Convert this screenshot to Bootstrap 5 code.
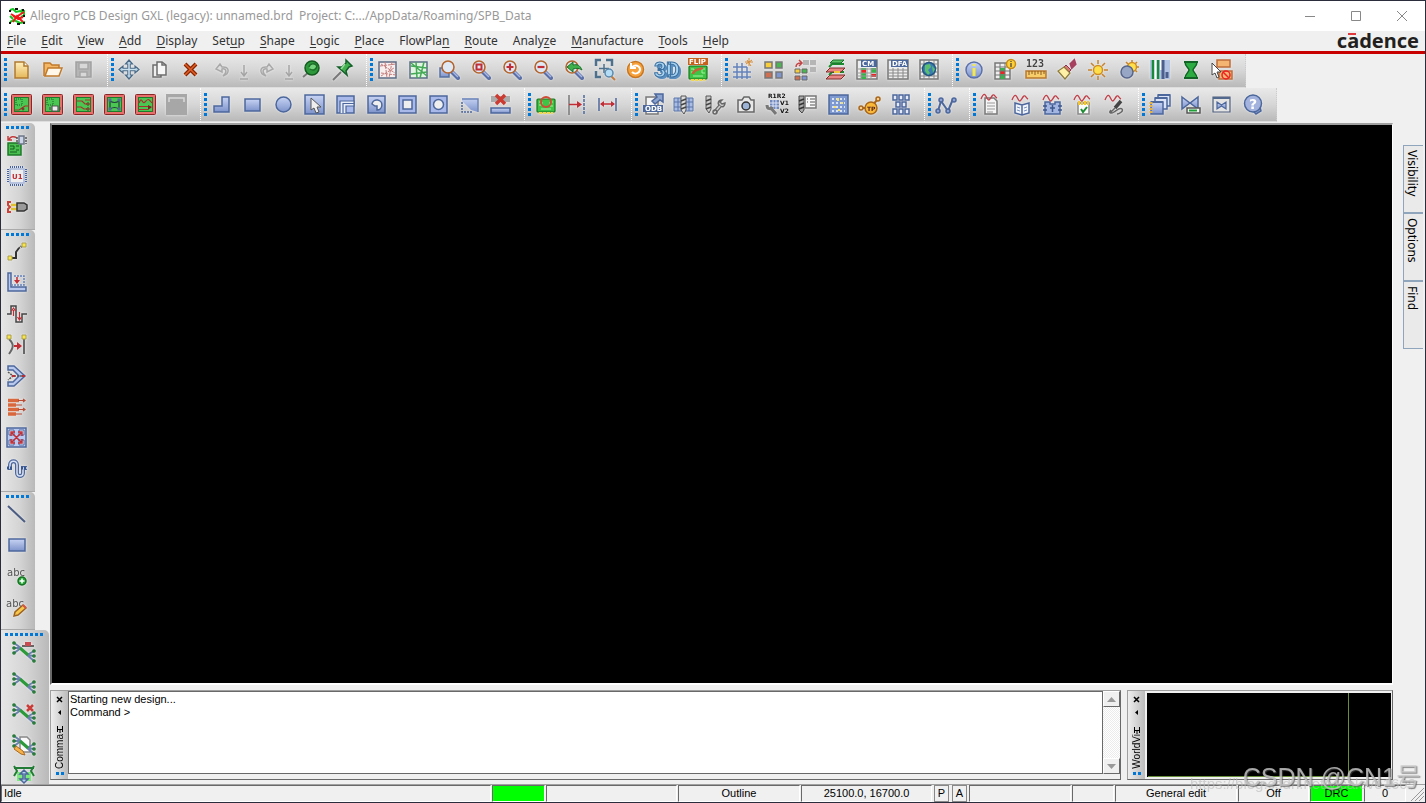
<!DOCTYPE html>
<html lang="en">
<head>
<meta charset="utf-8">
<meta name="viewport" content="width=device-width, initial-scale=1">
<title>Allegro PCB Design GXL (legacy): unnamed.brd</title>
<link href="https://cdn.jsdelivr.net/npm/bootstrap@5.3.0/dist/css/bootstrap.min.css" rel="stylesheet">
<style>
:root{--face:#f0f0f0;--dark:#696969;--mid:#a0a0a0;--blue:#4c679c}
body{font-family:"Noto Sans","Noto Sans CJK SC",sans-serif;font-size:12px;line-height:16px;color:#222;background:#2b2d3d}
.app-window{height:100vh;border:1px solid #2b2d3d;background:var(--face)}
.title-bar{height:30px;background:#fff;color:#999}
.title-text{white-space:pre}
.win-btn{width:46px;height:29px;border:0;background:none;padding:0}
.win-btn svg,.logo-icon{display:block;margin:auto}
.menu-bar{height:20px}
.menu-list{gap:15px;padding-left:6px}
.menu-bar a{color:#333;text-decoration:none}
.menu-bar u{text-underline-offset:2px}
.brand-name{font-size:20px;line-height:20px;font-weight:700;color:#231f20;padding-right:6px}
.brand-name i{top:6px;left:1px;width:8px;height:2px;background:#e03a3e}
.red-rule{height:3px;background:#c80000}
.tool-row{height:34px}
.tool-row + .tool-row{height:35px}
.tool-set{background:linear-gradient(#e9e9e9,#d6d6d6 50%,#b9b9b9);border-right:1px dotted #fff;border-bottom:1px solid #ddd;padding:0 8px 2px 3px}
.tool-row + .tool-row .tool-set{padding-bottom:0}
.tool-row .tool-set:last-child{border-right-color:#ccc}
.grip{flex:none;width:3px;height:23px;margin-right:-1px;background:repeating-linear-gradient(#0078d7 0 3px,transparent 3px 5px)}
.tool{flex:none;width:31px;height:31px;padding:0;border:0;border-radius:0;display:flex;align-items:center;justify-content:center}
.tool.narrow{width:14px}
.tool svg{width:22px;height:22px;fill:none;stroke-width:1.5;overflow:visible;filter:drop-shadow(0 0 1px #eee)}
.tool text{stroke:none;font-family:"DejaVu Sans",sans-serif;font-weight:700}
.side-tools{width:49px}
.side-set{width:34px;background:linear-gradient(90deg,#e6e6e6,#d4d4d4 55%,#b9b9b9);border-bottom:1px solid #aaa;border-radius:0 5px 0 0;padding:3px 2px 7px 0}
.side-set .grip{width:23px;height:3px;margin:0;background:repeating-linear-gradient(90deg,#0078d7 0 3px,transparent 3px 5px)}
.side-set.wide{width:48px}
.side-set.wide .tool{width:46px}
.side-set.wide .tool svg{width:24px}
.side-set.wide .grip{width:38px}
.work-area{min-height:0;padding-top:1px}
.center-area{min-width:0}
.board{background:#000;border:2px solid;border-color:var(--mid) #fff #fff var(--dark);border-right-width:1px;margin-bottom:5px}
.dock{height:90px;gap:6px;margin-bottom:4px;font-family:"Liberation Sans",sans-serif;font-size:11px;line-height:13px;color:#000}
.dock-pane{border:1px solid var(--mid);border-right-color:var(--dark);border-bottom-color:var(--dark)}
.dock-head{width:17px;background:linear-gradient(90deg,#eee,#bbb);padding:2px 0 4px}
.dock-head button{border:0;background:none;padding:0;height:13px;display:block}
.dock-head svg{display:block;margin:auto}
.dock-head .pin{height:9px}
.dock-name{writing-mode:vertical-rl;transform:rotate(180deg);font-size:10px;line-height:15px;white-space:nowrap;margin-bottom:3px}
.dock-dots{width:8px;height:3px;background:repeating-linear-gradient(90deg,#0078d7 0 3px,transparent 3px 5px)}
.console-box{border:1px solid var(--dark);resize:none;padding:1px;outline:0;margin-bottom:5px;overflow:hidden;background:#fff;color:#000}
.bar-track{width:17px;margin-bottom:5px;background:repeating-conic-gradient(#fff 0 25%,#ebebeb 0 50%) 0 0/2px 2px}
.bar-track button{width:17px;height:16px;padding:0;background:var(--face);border:1px solid;border-color:#fff var(--dark) var(--dark) #fff}
.bar-track svg{display:block;margin:auto}
.world-pane{width:266px}
.world-map{background:#000;margin:2px 1px 2px 2px}
.world-line{right:42px;top:0;bottom:0;left:1px;border:solid #6a8f3c;border-width:0 1px 1px 0}
.panel-tabs{width:32px;padding:22px 2px 0 10px}
.panel-tab{height:68px;border:1px solid #8ea5bb;border-right:0;background:#eaeaea;writing-mode:vertical-rl;text-align:left;padding:4px 3px 4px 0;color:#000;line-height:15px;width:20px}
.status-bar{height:18px;border-top:1px solid var(--mid);font-family:"Liberation Sans",sans-serif;font-size:11px;line-height:14px;color:#000}
.status-cell{border:1px solid;border-color:var(--dark) #fff #fff var(--dark);text-align:center;white-space:nowrap;margin-right:1px}
.status-cell.idle{text-align:left;padding-left:2px}
.status-bar button{flex:none;width:15px;padding:0;margin:0 2px 0 1px;border:1px solid;border-color:#fff #222 #222 #fff;outline:1px solid #888;outline-offset:-1px;background:var(--face);line-height:13px}
.w53{width:53px}.w122{width:122px}.w131{width:131px}.w102{width:102px}.w42{width:42px}.w71{width:71px}
.lime{background:#0f0}
.stamp{right:5px;bottom:10px;font:25px/32px "Liberation Sans","Noto Sans CJK SC",sans-serif;color:#c9c9c9cc;text-shadow:1px 1px 1px #555a;pointer-events:none;white-space:nowrap}
.stamp-url{right:10px;bottom:9px;font:15px/20px "Liberation Sans",sans-serif;color:#b9b9b999;pointer-events:none;white-space:nowrap}
</style>
</head>
<body class="m-0 overflow-hidden">
<svg width="0" height="0" class="position-absolute" aria-hidden="true">
<defs>
<linearGradient id="gb" x2="0" y2="1"><stop stop-color="#c8d4f4"/><stop offset="1" stop-color="#7d93ca"/></linearGradient>
<linearGradient id="gy" x2="0" y2="1"><stop stop-color="#fff0bd"/><stop offset="1" stop-color="#e5b75a"/></linearGradient>
<symbol id="lens" viewBox="0 0 22 22"><path d="M13 13l6 6" stroke="#5b6fa8" stroke-width="4" stroke-linecap="round"/><path d="M13 12l6 6" stroke="#a9b8e2" stroke-width="1.500"/><circle cx="9" cy="8" r="6" fill="#dfe9f6" stroke="#b3642c" stroke-width="1.600"/></symbol>
<symbol id="pcb" viewBox="0 0 22 22"><rect x=".5" y=".5" width="20" height="20" rx="1" fill="#e8706c" stroke="#8a2626" stroke-width="1"/><rect x="3.500" y="3.500" width="14" height="14" fill="#4cc653" stroke="#1d7a28" stroke-width="1"/></symbol>
<symbol id="net" viewBox="0 0 24 22"><path d="M2 2l7 5M1 7h8M2 12l7-5M22 10l-7 4M22 15l-7-1M22 20l-7-6" stroke="#6b80ad" stroke-width="2"/><path d="M8 7l8 7" stroke="#2c9a3a" stroke-width="3"/><g fill="#46b552" stroke="#1f7030" stroke-width="1.200"><circle cx="2" cy="2" r="1.200"/><circle cx="2" cy="7" r="1.200"/><circle cx="2" cy="12" r="1.200"/><circle cx="22" cy="10" r="1.200"/><circle cx="22" cy="15" r="1.200"/><circle cx="22" cy="20" r="1.200"/></g></symbol>
<symbol id="wave" viewBox="0 0 22 22"><path d="M1 6c3-7 4-5 6-1s3 1 5-2 3 1 5 2" fill="none" stroke="#c0404a" stroke-width="1.400"/></symbol>
<symbol id="board" viewBox="0 0 22 22"><rect x="2" y="5" width="18" height="13" rx="1" fill="#3fc445" stroke="#14751d" stroke-width="1.200"/><path d="M4 19h14" stroke="#f2d84a" stroke-width="2" stroke-dasharray="3 1"/><path d="M4 8h3v3H4m14-3h-3v4h3M6 15h10" stroke="#a6f0a0" stroke-width="1" fill="none"/></symbol>
</defs>
</svg>

<div class="app-window d-flex flex-column">
  <header>
    <div class="title-bar d-flex align-items-center ps-2">
      <svg class="logo-icon flex-shrink-0 ms-0 me-1" width="17" height="17" viewBox="0 0 17 17" fill="none"><path d="M1 2l3-1 3 3 4-1 4 2M1 14l4-2 6 3 5-1M12 2l3 1v4l-3 2M1 8l3 3" stroke="#10c820" stroke-width="2"/><path d="M2 6l5 3 8-5M4 14l4-6 6 6M4 8l5 3 5-2" stroke="#f01818" stroke-width="2"/><path d="M0 3h2M6 1h3M13 2h2M0 15h2M8 16h3M14 15h2M14 8h2" stroke="#111" stroke-width="2"/></svg>
      <span class="title-text flex-grow-1">Allegro PCB Design GXL (legacy): unnamed.brd  Project: C:.../AppData/Roaming/SPB_Data</span>
      <button class="win-btn" aria-label="Minimize"><svg width="12" height="12" stroke="#888"><path d="M1 6.500h10"/></svg></button>
      <button class="win-btn" aria-label="Maximize"><svg width="12" height="12" fill="none" stroke="#888"><path d="M1.500 1.500h9v9h-9z"/></svg></button>
      <button class="win-btn" aria-label="Close"><svg width="12" height="12" stroke="#888"><path d="M1 1l10 10M11 1L1 11"/></svg></button>
    </div>
    <div class="menu-bar d-flex align-items-center justify-content-between">
      <nav class="menu-list d-flex" aria-label="Main menu">
        <a href="#"><u>F</u>ile</a><a href="#"><u>E</u>dit</a><a href="#"><u>V</u>iew</a><a href="#"><u>A</u>dd</a><a href="#"><u>D</u>isplay</a><a href="#">Set<u>u</u>p</a><a href="#"><u>S</u>hape</a><a href="#"><u>L</u>ogic</a><a href="#"><u>P</u>lace</a><a href="#">FlowPla<u>n</u></a><a href="#"><u>R</u>oute</a><a href="#">Analy<u>z</u>e</a><a href="#"><u>M</u>anufacture</a><a href="#"><u>T</u>ools</a><a href="#"><u>H</u>elp</a>
      </nav>
      <span class="brand-name">c<span class="position-relative">a<i class="position-absolute"></i></span>dence</span>
    </div>
    <div class="red-rule"></div>
  </header>

  <div class="tool-row d-flex" role="toolbar" aria-label="Standard">
    <div class="tool-set d-flex align-items-center"><span class="grip"></span>
      <button class="btn tool" aria-label="New"><svg viewBox="0 0 22 22"><path d="M4 3h9l4 4v12H4z" fill="url(#gy)" stroke="#b0792f"/><path d="M13 3v4h4" fill="#fff" stroke="#b0792f"/></svg></button>
      <button class="btn tool" aria-label="Open"><svg viewBox="0 0 22 22"><path d="M2 17V4h6l2 2h7v4" fill="#f3b765" stroke="#c07a2c"/><path d="M3 17l3-8h14l-3 8z" fill="#fff8ea" stroke="#c07a2c"/></svg></button>
      <button class="btn tool" aria-label="Save"><svg viewBox="0 0 22 22"><path d="M3 3h15v15H3z" fill="#b5b5b5" stroke="#a0a0a0"/><path d="M6 4h9v6H6zM7 13h7v5H7z" fill="#d8d8d8" stroke="#a6a6a6"/></svg></button>
    </div>
    <div class="tool-set d-flex align-items-center"><span class="grip"></span>
      <button class="btn tool" aria-label="Move"><svg viewBox="0 0 22 22"><path d="M11 2v17M2 10.500h18" stroke="#4a6a86" stroke-width="3.500"/><path d="M11 1l3.500 4h-7zM11 20l3.500-4h-7zM1 10.500L5 7v7zM21 10.500L17 7v7z" fill="#b7d3e6" stroke="#4a6a86" stroke-width="1.200"/><path d="M11 4v13M4 10.500h14" stroke="#c9e0ef" stroke-width="1.500"/></svg></button>
      <button class="btn tool" aria-label="Copy"><svg viewBox="0 0 22 22" stroke="#6c6c6c"><path d="M4 6h8v12H4z" fill="#eee"/><path d="M8 3h5l4 3v10H8z" fill="#f7f7f7"/><path d="M13 3v3h4"/></svg></button>
      <button class="btn tool" aria-label="Delete"><svg viewBox="0 0 22 22"><path d="M5 5l11 11M16 5L5 16" stroke="#8a2500" stroke-width="4"/><path d="M5 5l11 11M16 5L5 16" stroke="#e0602a" stroke-width="1.500"/></svg></button>
      <button class="btn tool" aria-label="Undo"><svg viewBox="0 0 22 22" stroke="#a9a9a9"><path d="M9 5L5 10l6 3v-3c5-1 5 4 1 7 7-2 7-10-1-9z" fill="#ddd"/></svg></button>
      <button class="btn tool narrow" aria-label="Undo list"><svg viewBox="0 0 22 22" stroke="#a5a5a5"><path d="M11 6v11M8 13l3 4 3-4M7 20h8"/></svg></button>
      <button class="btn tool" aria-label="Redo"><svg viewBox="0 0 22 22" stroke="#a9a9a9"><path d="M13 5l4 5-6 3v-3c-5-1-5 4-1 7-7-2-7-10 1-9z" fill="#ddd"/></svg></button>
      <button class="btn tool narrow" aria-label="Redo list"><svg viewBox="0 0 22 22" stroke="#a5a5a5"><path d="M11 6v11M8 13l3 4 3-4M7 20h8"/></svg></button>
      <button class="btn tool" aria-label="Fix"><svg viewBox="0 0 22 22"><path d="M2 18l6-5" stroke="#777" stroke-width="2"/><circle cx="11" cy="9" r="7" fill="#2c983b" stroke="#145c20"/><path d="M8 8c1-4 6-4 8-1-1 4-4 5-7 3" fill="#74d27c" stroke="#1c6e29"/></svg></button>
      <button class="btn tool" aria-label="Unfix"><svg viewBox="0 0 22 22"><path d="M1 21l8-8" stroke="#777" stroke-width="2"/><path d="M14 1l6 6-3 1-3 4 1 4-9-8h4l4-4z" fill="#43b04e" stroke="#14602a"/><path d="M13 5l-4 5" stroke="#9be0a0"/></svg></button>
    </div>
    <div class="tool-set d-flex align-items-center"><span class="grip"></span>
      <button class="btn tool" aria-label="Unrats all"><svg viewBox="0 0 22 22"><path d="M2 3h17v16H2z" fill="#f7eeee" stroke="#5b6b85"/><path d="M3 7l16-2M4 14l15 2M8 3l2 16M15 3l-3 16M4 5l14 9M4 17l13-8" stroke="#c47c7c" stroke-width="1" stroke-dasharray="3 1"/></svg></button>
      <button class="btn tool" aria-label="Rats all"><svg viewBox="0 0 22 22"><path d="M2 3h17v16H2z" fill="#e2f5e2" stroke="#5b6b85"/><path d="M3 7l16 2M3 15l16-2M8 3l1 16M16 3l-4 16M3 4l16 13" stroke="#42a955"/></svg></button>
      <button class="btn tool" aria-label="Zoom points"><svg viewBox="0 0 22 22"><path d="M1 9h9v9H1z" fill="url(#gb)" stroke="#55709f"/><use href="#lens"/></svg></button>
      <button class="btn tool" aria-label="Zoom fit"><svg viewBox="0 0 22 22"><use href="#lens"/><path d="M6.500 5.500h5v5h-5z" stroke="#c22c34" stroke-width="2"/></svg></button>
      <button class="btn tool" aria-label="Zoom in"><svg viewBox="0 0 22 22"><use href="#lens"/><path d="M9 4.500v7M5.500 8h7" stroke="#c22c34" stroke-width="2.200"/></svg></button>
      <button class="btn tool" aria-label="Zoom out"><svg viewBox="0 0 22 22"><use href="#lens"/><path d="M5.500 8h7" stroke="#c22c34" stroke-width="2.200"/></svg></button>
      <button class="btn tool" aria-label="Zoom previous"><svg viewBox="0 0 22 22"><use href="#lens"/><path d="M4 8l6-5v3c4-1 7 0 9 5-3-2-5-2-9-1v3z" fill="#3fb04c" stroke="#1a7028" stroke-width="1"/></svg></button>
      <button class="btn tool" aria-label="Zoom selection"><svg viewBox="0 0 22 22"><path d="M2 7V1h5M12 1h6v6M2 12v6h5" stroke="#4d708c" stroke-width="2.500"/><path d="M10 5v9M5 9.500h10" stroke="#4d708c" stroke-width="1.500"/><path d="M17 17l4 4" stroke="#c27a3c" stroke-width="2"/><circle cx="15" cy="14" r="4" fill="#b5dcf5" stroke="#5a87ab"/></svg></button>
      <button class="btn tool" aria-label="Refresh"><svg viewBox="0 0 22 22"><circle cx="10.500" cy="10.500" r="8" fill="#f7a13c" stroke="#c77722"/><path d="M7 8c5-4 10 1 7 5-2 2-5 2-7 0M6 4v5h5" stroke="#fff" stroke-width="2"/></svg></button>
      <button class="btn tool" aria-label="3D view"><svg viewBox="0 0 22 22"><text x="0" y="20" font-size="21" style="font-family:Roboto,sans-serif;font-weight:900;fill:#5b8fc0">3D</text><text x="-2" y="18" font-size="21" style="font-family:Roboto,sans-serif;font-weight:700;fill:#a8d3f0;stroke:#3a6f9f;stroke-width:1px">3D</text></svg></button>
      <button class="btn tool" aria-label="Flip design"><svg viewBox="0 0 22 22"><use href="#board" y="2"/><path d="M6 15c0-5 8-5 10-6" stroke="#c66238" stroke-width="2.500"/><path d="M1-1h20v7H1z" fill="#c7621d"/><text x="2" y="5" font-size="7" fill="#fff">FLIP</text></svg></button>
    </div>
    <div class="tool-set d-flex align-items-center"><span class="grip"></span>
      <button class="btn tool" aria-label="Grid toggle"><svg viewBox="0 0 22 22"><path d="M5 4v16M10 4v16M15 8v12M1 8h14M1 13h18M1 18h18" stroke="#6382bb"/><path d="M14 5l6-4M15 1l4 6M17-1v8M13 3h8" stroke="#d38a34" stroke-width="1"/></svg></button>
      <button class="btn tool" aria-label="Color dialog"><svg viewBox="0 0 22 22" stroke="#777" stroke-width="1.200"><path d="M2 3h7v6H2z" fill="#f7ce3a"/><path d="M13 3h6v6h-6z" fill="#48b750"/><path d="M2 13h7v6H2z" fill="#cf6f52"/><path d="M13 13h6v6h-6z" fill="#7d95d0"/></svg></button>
      <button class="btn tool" aria-label="Swap colors"><svg viewBox="0 0 22 22"><path d="M9 1h6v5H9zM16 1h6v5h-6zM16 8h6v5h-6z" fill="#b5b5b5"/><g stroke="#666" stroke-width="1"><path d="M1 10h5v4H1z" fill="#f7ce3a"/><path d="M8 10h5v4H8z" fill="#48b750"/><path d="M1 17h5v4H1z" fill="#cf6f52"/><path d="M8 17h5v4H8z" fill="#7d95d0"/></g><path d="M2 8c0-3 2-4 5-4M5 1l3 3-3 3" stroke="#c44545"/></svg></button>
      <button class="btn tool" aria-label="Cross section"><svg viewBox="0 0 22 22"><path d="M1 20l4-4h15l-4 4z" fill="#e98683" stroke="#7e2b2b" stroke-width="1"/><path d="M4 16l3-3h12M4 8l3-3h12" stroke="#1a8c2f" stroke-width="2"/><path d="M1 13l4-4h15l-4 4z" fill="#e98683" stroke="#7e2b2b" stroke-width="1"/><path d="M5 4l3-3h11l-3 3z" fill="#5ac466" stroke="#1a6c2a" stroke-width="1"/><path d="M9 13h6" stroke="#f2c63a" stroke-width="2"/></svg></button>
      <button class="btn tool" aria-label="Constraint manager"><svg viewBox="0 0 22 22"><path d="M1 1h20v19H1z" fill="#eee" stroke="#777"/><path d="M5 9h5v11H5zM15 9h5v5h-5z" fill="#36b44a"/><path d="M5 11h5v3H5zM15 15h5v3h-5z" fill="#e22"/><path d="M1 10h20M1 14h20M1 17h20M5 9v11M11 9v11M15 9v11" stroke="#999" stroke-width="1"/><path d="M5 1h16v7H5z" fill="#4c679c"/><text x="6" y="7" font-size="7" fill="#fff">CM</text></svg></button>
      <button class="btn tool" aria-label="DFA spreadsheet"><svg viewBox="0 0 22 22"><path d="M1 1h20v19H1z" fill="#eee" stroke="#777"/><path d="M1 11h20M1 14h20M1 17h20M6 9v11M11 9v11M16 9v11" stroke="#888" stroke-width="1"/><path d="M4 1h17v7H4z" fill="#4c679c"/><text x="5" y="7" font-size="7" fill="#fff">DFA</text></svg></button>
      <button class="btn tool" aria-label="Global constraints"><svg viewBox="0 0 22 22"><path d="M2 1h18v19H2z" fill="#eee" stroke="#777"/><path d="M2 5h18M2 9h18M2 13h18M2 17h18M6 1v19M11 1v19M16 1v19" stroke="#888" stroke-width="1"/><circle cx="11" cy="10" r="6.500" fill="#3c7db8" stroke="#245680"/><path d="M7 6l5-1 1 3-3 3 2 3-2 2-3-4zM14 7l3 3-2 4z" fill="#5cc06b"/></svg></button>
    </div>
    <div class="tool-set d-flex align-items-center"><span class="grip"></span>
      <button class="btn tool" aria-label="Show element"><svg viewBox="0 0 22 22"><circle cx="11" cy="11" r="8" fill="url(#gb)" stroke="#5b70a8"/><path d="M11 9v8M11 5v2" stroke="#f5e94a" stroke-width="3"/></svg></button>
      <button class="btn tool" aria-label="Property sheet"><svg viewBox="0 0 22 22"><path d="M1 4h15v16H1z" fill="#eee" stroke="#777"/><path d="M6 9h5v11H6z" fill="#36b44a"/><path d="M6 12h5v3H6z" fill="#e22"/><path d="M1 8h15M1 12h15M1 16h15M6 4v16M11 4v16" stroke="#777" stroke-width="1"/><circle cx="17" cy="5" r="4.500" fill="#fad13c" stroke="#c78a12"/><path d="M17 2v1M17 4v4" stroke="#654"/></svg></button>
      <button class="btn tool" aria-label="Measure"><svg viewBox="0 0 22 22"><text x="1" y="8" font-size="10" style="font-family:'DejaVu Sans Mono',monospace" fill="#444">123</text><path d="M1 12h20v7H1z" fill="#f7cc6a" stroke="#b9782b"/><path d="M4 12v4M7 12v3M10 12v4M13 12v3M16 12v4M19 12v3" stroke="#8b5a20" stroke-width="1"/></svg></button>
      <button class="btn tool" aria-label="Highlight"><svg viewBox="0 0 22 22"><path d="M15 5l3-3 1 3-3 3z" fill="#8f3452" stroke="#a5405f" stroke-width="3"/><path d="M10 6l5 5-2 2-5-5z" fill="#d87a72" stroke="#8f3452" stroke-width="1"/><path d="M8 8l6 6-5 6-7-8z" fill="#fff0a8" stroke="#8b7a3c" stroke-width="1.200"/></svg></button>
      <button class="btn tool" aria-label="Shadow on"><svg viewBox="0 0 22 22"><path d="M11 1v4M11 17v4M1 11h4M17 11h4M4 4l3 3M15 15l3 3M18 4l-3 3M4 18l3-3" stroke="#c8822d"/><circle cx="11" cy="11" r="4.500" fill="#ffe04a" stroke="#cf8e24"/></svg></button>
      <button class="btn tool" aria-label="Shadow off"><svg viewBox="0 0 22 22"><path d="M14 1v3M21 8h-3M19 3l-2 2M8 3l2 2M19 13l-2-2" stroke="#c8822d"/><circle cx="14" cy="8" r="4.500" fill="#ffe04a" stroke="#cf8e24"/><circle cx="9" cy="13" r="6" fill="#98a6c6" stroke="#56658b"/></svg></button>
      <button class="btn tool" aria-label="Layer stripes"><svg viewBox="0 0 22 22"><path d="M1 1h20v19H1z" fill="#b3c3e4"/><path d="M4 1v19M9 1v19" stroke="#188b38" stroke-width="2.500"/><path d="M6.500 1v19M12 1v10" stroke="#fff" stroke-width="2"/><path d="M14 1v19M18 13v6" stroke="#4c5f8c" stroke-width="3"/></svg></button>
      <button class="btn tool" aria-label="Waive DRC"><svg viewBox="0 0 22 22"><path d="M5 3h12c0 5-4 6-4 8s4 4 4 8H5c0-4 4-6 4-8S5 8 5 3z" fill="#2dab43" stroke="#116426"/><path d="M4 3h14M4 19h14" stroke="#116426" stroke-width="2"/></svg></button>
      <button class="btn tool" aria-label="Selection filter"><svg viewBox="0 0 22 22"><path d="M6 1h13v7H6zM8 12h13v8H8z" fill="#f4b573" stroke="#bd6c3b"/><circle cx="15" cy="16" r="4" stroke="#e22"/><path d="M12 13l6 6" stroke="#e22"/><path d="M1 4v12l3-2 2 5 2-1-2-5h4z" fill="#fff" stroke="#444" stroke-width="1"/></svg></button>
    </div>
  </div>

  <div class="tool-row d-flex" role="toolbar" aria-label="Design">
    <div class="tool-set d-flex align-items-center"><span class="grip"></span>
      <button class="btn tool" aria-label="Etch edit"><svg viewBox="0 0 22 22"><use href="#pcb"/><path d="M5 5h6v6H5z" stroke="#176022" stroke-width="1" stroke-dasharray="1 1"/><path d="M4 16h4l3-2M11 14l3-2h3" stroke="#a5322c" stroke-width="1.200"/><circle cx="12" cy="15" r="1" stroke="#7c2020" stroke-width="1"/></svg></button>
      <button class="btn tool" aria-label="Placement edit"><svg viewBox="0 0 22 22"><use href="#pcb"/><path d="M5 5h6v6H5z" stroke="#176022" stroke-width="1" stroke-dasharray="1 1"/><path d="M10 12h6v5h-6zM8 13v3M18 13v3" fill="#eee" stroke="#555" stroke-width="1.200"/></svg></button>
      <button class="btn tool" aria-label="Flow edit"><svg viewBox="0 0 22 22"><use href="#pcb"/><path d="M4 7h5l3 3h2M4 13h4l3 2h3M12 6h5" stroke="#a5322c" stroke-width="1.200"/><circle cx="15" cy="10" r="1.200" stroke="#7c2020" stroke-width="1"/><circle cx="15" cy="15" r="1.200" stroke="#7c2020" stroke-width="1"/></svg></button>
      <button class="btn tool" aria-label="General edit"><svg viewBox="0 0 22 22"><use href="#pcb"/><path d="M6 7c3 2 6 2 9 0M6 15c3-2 6-2 9 0M6 7v8M15 7v8" stroke="#23413c" stroke-width="1.200"/><path d="M4.500 4.500h3v3h-3zM13.500 4.500h3v3h-3zM4.500 13.500h3v3h-3zM13.500 13.500h3v3h-3z" fill="#526b92"/></svg></button>
      <button class="btn tool" aria-label="Signal edit"><svg viewBox="0 0 22 22"><use href="#pcb"/><path d="M4 9c3-8 3 2 6-1s3-4 7 1M4 12.500h9M4 15.500h9" stroke="#a5322c" stroke-width="1.200"/><path d="M13 11l4 2-4 3z" fill="#7c2020"/></svg></button>
      <button class="btn tool" aria-label="Shape edit"><svg viewBox="0 0 22 22"><path d="M0 0h21v21H0z" fill="#a7a7a7"/><path d="M3 8V4h15v4" stroke="#dadada"/></svg></button>
    </div>
    <div class="tool-set d-flex align-items-center"><span class="grip"></span>
      <button class="btn tool" aria-label="Add polygon"><svg viewBox="0 0 22 22"><path d="M11 3h7v15H3v-6h8z" fill="url(#gb)" stroke="#4c679c"/></svg></button>
      <button class="btn tool" aria-label="Add rectangle"><svg viewBox="0 0 22 22"><path d="M3 5h15v12H3z" fill="url(#gb)" stroke="#4c679c"/></svg></button>
      <button class="btn tool" aria-label="Add circle"><svg viewBox="0 0 22 22"><circle cx="10.500" cy="10.500" r="7.500" fill="url(#gb)" stroke="#4c679c"/></svg></button>
      <button class="btn tool" aria-label="Select shape"><svg viewBox="0 0 22 22"><path d="M1 1h19v19H1z" fill="url(#gb)" stroke="#4c679c"/><path d="M7 4v12l3-2 2 5 3-1-2-5h4z" fill="#eee" stroke="#555" stroke-width="1"/></svg></button>
      <button class="btn tool" aria-label="Void element"><svg viewBox="0 0 22 22"><path d="M2 2h17v17H2z" fill="#a9baea" stroke="#4c679c"/><path d="M5 19V7h14v5H11v7" fill="#e9eefb" stroke="#4c679c" stroke-width="1.200"/><path d="M8 19V9.500h11" stroke="#4c679c" stroke-width="1.200"/></svg></button>
      <button class="btn tool" aria-label="Void polygon"><svg viewBox="0 0 22 22"><path d="M2 2h17v17H2z" fill="url(#gb)" stroke="#4c679c"/><path d="M6 10a5 5 0 1 1 5 6v-4H9l-3-2z" fill="#eee" stroke="#4c679c"/></svg></button>
      <button class="btn tool" aria-label="Void rectangle"><svg viewBox="0 0 22 22"><path d="M2 2h17v17H2z" fill="#a9baea" stroke="#4c679c"/><path d="M6 6h9v9H6z" fill="#eee" stroke="#4c679c"/></svg></button>
      <button class="btn tool" aria-label="Void circle"><svg viewBox="0 0 22 22"><path d="M2 2h17v17H2z" fill="#a9baea" stroke="#4c679c"/><circle cx="10.500" cy="10.500" r="5" fill="#eee" stroke="#4c679c"/></svg></button>
      <button class="btn tool" aria-label="Edit boundary"><svg viewBox="0 0 22 22"><path d="M3 4h16v14l-7-2-9-9z" fill="url(#gb)"/><path d="M3 5h16v13" stroke="#6d84b5"/><path d="M3 8v10h10" stroke="#4c679c" stroke-dasharray="2 1"/></svg></button>
      <button class="btn tool" aria-label="Delete islands"><svg viewBox="0 0 22 22"><path d="M1 2h19v6H1z" fill="#aaa"/><path d="M6 1l9 9M15 1l-9 9" stroke="#cc3b32" stroke-width="3.500"/><path d="M1 14h19v5H1z" fill="url(#gb)" stroke="#4c679c"/></svg></button>
    </div>
    <div class="tool-set d-flex align-items-center"><span class="grip"></span>
      <button class="btn tool" aria-label="Design outline"><svg viewBox="0 0 22 22"><use href="#board"/><circle cx="11" cy="8" r="5" stroke="#d04b35" stroke-width="2"/></svg></button>
      <button class="btn tool" aria-label="Place edge"><svg viewBox="0 0 22 22"><path d="M3 1v20" stroke="#777"/><path d="M18 1v20" stroke="#4c679c" stroke-dasharray="3 1"/><path d="M3 10.500h10" stroke="#c22c34"/><path d="M11 7l5 3.500-5 3.500z" fill="#c22c34"/></svg></button>
      <button class="btn tool" aria-label="Spacing"><svg viewBox="0 0 22 22"><path d="M2 4v13M19 4v13" stroke="#4c679c"/><path d="M4 10h13" stroke="#c22c34"/><path d="M3 10l4-3v6zM18 10l-4-3v6z" fill="#c22c34"/></svg></button>
    </div>
    <div class="tool-set d-flex align-items-center"><span class="grip"></span>
      <button class="btn tool" aria-label="ODB export"><svg viewBox="0 0 22 22"><path d="M4 3h12v17H4z" fill="#f5f5f5" stroke="#777"/><path d="M10 7l5-4-2-3h8v8l-3-2-5 4z" fill="#8ba3cf" stroke="#4c679c"/><path d="M1 11h20v7H1z" fill="#4c679c"/><text x="3" y="17" font-size="7" fill="#fff">ODB</text></svg></button>
      <button class="btn tool" aria-label="NC drill"><svg viewBox="0 0 22 22"><path d="M1 4h19v13H1z" fill="#aabde4" stroke="#5b74a8" stroke-width="1"/><path d="M1 8h19M1 13h19M5 4v13M16 4v13" stroke="#5b74a8" stroke-width="1"/><path d="M8 2h5v14l-2 4-3-4z" fill="#ddd" stroke="#555" stroke-width="1"/><path d="M8 7l5-2M8 11l5-2M8 15l5-2" stroke="#444"/></svg></button>
      <button class="btn tool" aria-label="NC parameters"><svg viewBox="0 0 22 22"><path d="M2 2h5v13l-2 4-3-4z" fill="#ccc" stroke="#555" stroke-width="1"/><path d="M2 7l5-2M2 11l5-2M2 15l5-2" stroke="#444"/><path d="M11 18l5-6" stroke="#666" stroke-width="4"/><path d="M18 6c-4 0-5 4-2 6s5 0 5-3l-3 1-2-2z" fill="#ccc" stroke="#666"/><path d="M11 18l5-6" stroke="#ccc" stroke-width="1.500"/><circle cx="11" cy="18" r="2" stroke="#666"/></svg></button>
      <button class="btn tool" aria-label="Artwork"><svg viewBox="0 0 22 22"><path d="M3 6h4l2-3h5l2 3h3v12H3z" fill="#e8e8e8" stroke="#666"/><circle cx="11" cy="12" r="4" fill="#9db4d7" stroke="#333"/></svg></button>
      <button class="btn tool" aria-label="Rename refdes"><svg viewBox="0 0 22 22"><text x="2" y="4" font-size="6" fill="#111">R1R2</text><path d="M4 6h9v9H4z" fill="#7188bd"/><path d="M7 6v9M10 6v9M4 9h9M4 12h9" stroke="#dce4f8" stroke-width="1"/><text x="14" y="11" font-size="6" fill="#111">V1</text><text x="14" y="19" font-size="6" fill="#111">V2</text><path d="M4 13l6 7M1 11c0 5 5 4 5 2" stroke="#777" stroke-width="3"/></svg></button>
      <button class="btn tool" aria-label="Drill legend"><svg viewBox="0 0 22 22"><path d="M2 2h5v14l-2 3-3-3z" fill="#aaa" stroke="#444" stroke-width="1"/><path d="M2 7l5-2M2 11l5-2M2 15l5-2" stroke="#333"/><path d="M8 2h11v12H8z" fill="#fafafa" stroke="#777"/><path d="M13 5h5M13 8h5M13 11h5M10 5h1M10 8h1" stroke="#555" stroke-width="1"/></svg></button>
      <button class="btn tool" aria-label="Drill table"><svg viewBox="0 0 22 22"><path d="M1 1h19v19H1z" fill="#7e98d0" stroke="#4c679c"/><path d="M4 5h13M4 9h13M4 13h13M4 17h13" stroke="#d8e2f8" stroke-width="2" stroke-dasharray="2 2"/><path d="M9 4h2v3H9zM13 8h2v2h-2zM6 12h2v2H6zM10 15h2v2h-2z" fill="#f8df68"/></svg></button>
      <button class="btn tool" aria-label="Testprep"><svg viewBox="0 0 22 22"><path d="M3 14h8l8-9" stroke="#a8671c" stroke-width="2"/><circle cx="2" cy="14" r="2" fill="#f5d08c" stroke="#a8671c"/><circle cx="19" cy="5" r="2" fill="#f5d08c" stroke="#a8671c"/><circle cx="12" cy="14" r="6" fill="#f9b838" stroke="#a8671c"/><text x="8" y="17" font-size="6" fill="#522">TP</text></svg></button>
      <button class="btn tool" aria-label="Panelize"><svg viewBox="0 0 22 22" stroke="#4c679c"><path d="M3 1h4v5H3zM9 1h4v5H9zM15 1h4v5h-4zM6 8h4v5H6zM12 8h4v5h-4zM3 15h4v5H3zM9 15h4v5H9zM15 15h4v5h-4z" fill="#e4eafa"/></svg></button>
    </div>
    <div class="tool-set d-flex align-items-center"><span class="grip"></span>
      <button class="btn tool" aria-label="Net schedule"><svg viewBox="0 0 22 22"><path d="M3 17L6 7l7 10 5-12" stroke="#4c679c" stroke-width="2"/><g fill="#8ea2d2" stroke="#4c679c"><circle cx="3" cy="17" r="2"/><circle cx="6" cy="6" r="2"/><circle cx="13" cy="17" r="2"/><circle cx="19" cy="6" r="2"/></g></svg></button>
    </div>
    <div class="tool-set d-flex align-items-center"><span class="grip"></span>
      <button class="btn tool" aria-label="Signal report"><svg viewBox="0 0 22 22"><path d="M5 4h9l3 3v13H5z" fill="#f5f5f5" stroke="#777"/><path d="M7 9h8M7 12h8M7 15h8M7 18h6" stroke="#999" stroke-width="1"/><use href="#wave" y="-1"/></svg></button>
      <button class="btn tool" aria-label="Signal library"><svg viewBox="0 0 22 22"><path d="M4 9l7 2 7-2v10l-7 2-7-2zM11 11v10" fill="#f0f4fb" stroke="#4c679c"/><path d="M6 13l3 1M6 16l3 1M13 14l3-1M13 17l3-1" stroke="#7890bd" stroke-width="1"/><use href="#wave"/></svg></button>
      <button class="btn tool" aria-label="Signal model"><svg viewBox="0 0 22 22"><path d="M3 8h5v2h5V8h5v12H3z" fill="#a3b6e2" stroke="#4c679c"/><path d="M1 12h4M1 16h4M16 12h4M16 16h4M8 14h5M10.500 11v7" stroke="#3e588d"/><use href="#wave"/></svg></button>
      <button class="btn tool" aria-label="Signal audit"><svg viewBox="0 0 22 22"><path d="M5 9h11v11H5z" fill="#fafafa" stroke="#888"/><path d="M5 9h11" stroke="#f4c632" stroke-width="4" stroke-dasharray="2 1"/><path d="M8 15l2 3 4-5" stroke="#1c8b32" stroke-width="2"/><use href="#wave"/></svg></button>
      <button class="btn tool" aria-label="Signal probe"><svg viewBox="0 0 22 22"><path d="M17 7l-6 7" stroke="#444" stroke-width="3.500"/><path d="M11 14l-5 5M7 16c-3 3 0 4 3 2s6-5 8-3-3 5-5 5" stroke="#666"/><use href="#wave"/></svg></button>
    </div>
    <div class="tool-set d-flex align-items-center"><span class="grip"></span>
      <button class="btn tool" aria-label="Reports"><svg viewBox="0 0 22 22" stroke="#4c679c"><path d="M9 1h12v11H9z" fill="#dae3f6"/><path d="M6 4h12v11H6z" fill="#dae3f6"/><path d="M2 8h12v12H2z" fill="url(#gb)"/><path d="M9 1h12M6 4h12M2 8h12" stroke-width="2"/><path d="M2 8v12" stroke="#e8b33e" stroke-width="3" stroke-dasharray="2 1"/></svg></button>
      <button class="btn tool" aria-label="Status"><svg viewBox="0 0 22 22"><path d="M2 3l8 6 8-6v12l-8-6-8 6z" fill="url(#gb)" stroke="#4c679c"/><path d="M7 14h13v5H7z" fill="#f5f5f5" stroke="#555"/><path d="M9 16.500h8" stroke="#21a038" stroke-width="2"/></svg></button>
      <button class="btn tool" aria-label="Database window"><svg viewBox="0 0 22 22"><path d="M2 3h17v15H2z" fill="#e4e4e4" stroke="#4c5d7c" stroke-width="1.200"/><path d="M2 4h17" stroke="#53688d" stroke-width="2"/><path d="M6 8l4.500 3L15 8v7l-4.500-3L6 15z" fill="url(#gb)" stroke="#4c679c" stroke-width="1.200"/></svg></button>
      <button class="btn tool" aria-label="Help"><svg viewBox="0 0 22 22"><path d="M11 17l7-4 1 4-5 3z" fill="#8ba0d2" stroke="#4c679c"/><circle cx="11" cy="9.500" r="8.500" fill="#a3b3de" stroke="#4c679c"/><text x="7" y="15" font-size="14" fill="#fff">?</text></svg></button>
    </div>
  </div>

  <div class="work-area d-flex flex-grow-1">
    <aside class="side-tools flex-shrink-0 d-flex flex-column overflow-hidden" aria-label="Side tools">
      <div class="side-set d-flex flex-column align-items-center flex-shrink-0"><span class="grip"></span>
        <button class="btn tool" aria-label="Place manual"><svg viewBox="0 0 22 22"><path d="M2 9h13v12H2z" fill="#49bf50" stroke="#1c7a28"/><path d="M4 12h4v3H4M10 12h3M10 16h3M4 18h7" stroke="#145c1d" stroke-width="1"/><path d="M3 6c1-4 5-4 8-2M2 2v4h4" stroke="#c33c3c"/><path d="M13 2h5v8h-5z" fill="#cdd5e8" stroke="#6c7587"/><path d="M11 3v7M20 3v7" stroke="#555" stroke-dasharray="2 1"/></svg></button>
        <button class="btn tool" aria-label="Place component"><svg viewBox="0 0 22 22"><path d="M4 4h14v14H4z" fill="#eee" stroke="#a7b7da"/><path d="M4 2h14M4 20h14M2 4v14M20 4v14" stroke="#4663a0" stroke-width="2" stroke-dasharray="1 1"/><text x="6" y="14" font-size="7" fill="#c22c34">U1</text></svg></button>
        <button class="btn tool" aria-label="Assign pin"><svg viewBox="0 0 22 22"><path d="M5 6H2v3l2 2-2 2v3h3" stroke="#c8413b" stroke-width="2"/><path d="M5 9h7M5 13h7" stroke="#e0c02c" stroke-width="2.500"/><path d="M11 7h7l3 2v4l-3 2h-7z" fill="#9a9a9a" stroke="#333"/></svg></button>
      </div>
      <div class="side-set d-flex flex-column align-items-center flex-shrink-0"><span class="grip"></span>
        <button class="btn tool" aria-label="Add connect"><svg viewBox="0 0 22 22"><path d="M6 17h4v-6l3-4" stroke="#333" stroke-width="2"/><path d="M13 7l3-2" stroke="#333" stroke-width="2" stroke-dasharray="1 1"/><path d="M2 15h4v4H2zM16 2h4v4h-4z" fill="#f8e54c" stroke="#a99e4c" stroke-width="1"/></svg></button>
        <button class="btn tool" aria-label="Slide"><svg viewBox="0 0 22 22"><path d="M8 4h10v9H6" stroke="#6681bb" stroke-dasharray="2 1"/><path d="M2 1h3v14h15v4H2z" fill="#b9c9ed" stroke="#4c679c"/><path d="M11 5v4" stroke="#c22c34"/><path d="M8 8l3 4 3-4z" fill="#c22c34"/></svg></button>
        <button class="btn tool" aria-label="Delay tune"><svg viewBox="0 0 22 22"><path d="M1 11h4V3h5v16h6v-8h5" stroke="#444"/><path d="M7.500 13V7M5.500 8l2-3 2 3M13.500 9v7M11.500 14l2 3 2-3" stroke="#c22c34" stroke-width="1.200"/></svg></button>
        <button class="btn tool" aria-label="Custom smooth"><svg viewBox="0 0 22 22"><path d="M3 5c5 5 5 8 0 15M18 4v16" stroke="#666" stroke-width="2"/><path d="M8 12h4" stroke="#c22c34" stroke-width="2"/><path d="M11 8l5 4-5 4z" fill="#c22c34"/><path d="M1 1h4v4H1zM16 1h4v4h-4z" fill="#f8e54c" stroke="#a99e4c" stroke-width="1"/></svg></button>
        <button class="btn tool" aria-label="Vertex"><svg viewBox="0 0 22 22"><path d="M2 1h6l11 10-11 10H2v-4h5l6-6-6-6H2z" fill="#b9c9ed" stroke="#4c679c"/><path d="M2 7l5 4-5 4M8 11h10" stroke="#555" stroke-dasharray="2 1"/><path d="M6 10h3v2H6zM16 10h3v2h-3z" fill="#c22c34"/></svg></button>
        <button class="btn tool" aria-label="Spread"><svg viewBox="0 0 22 22"><path d="M2 4.500h11M2 9h8M2 13.500h11M2 18h8" stroke="#d9673d" stroke-width="3.500"/><path d="M12 4.500h7M10 9h6M12 13.500h7M10 18h6M17 3l2 1.500L17 6M17 12l2 1.500-2 1.500" stroke="#b94b33" stroke-width="1.200"/></svg></button>
        <button class="btn tool" aria-label="Auto-interactive"><svg viewBox="0 0 22 22"><path d="M1 1h19v19H1z" fill="#b9c9f0" stroke="#4c679c"/><path d="M3 3h5v5H3zM13 3h5v5h-5zM3 13h5v5H3zM13 13h5v5h-5z" fill="#eef3fd" stroke="#4c679c" stroke-width="1"/><path d="M6 6l9 9M15 6l-9 9M5 9V5h4M12 5h4v4M5 12v4h4M12 16h4v-4" stroke="#c22c34"/></svg></button>
        <button class="btn tool" aria-label="Meander"><svg viewBox="0 0 22 22"><path d="M2 10h2V7c0-5 7-5 7 0v8c0 4 6 4 6 0v-5h4" stroke="#4c679c" stroke-width="4"/><path d="M2 10h2V7c0-5 7-5 7 0v8c0 4 6 4 6 0v-5h4" stroke="#d7e0f4"/><path d="M1 10h5M15 10h6" stroke="#35578e" stroke-width="3" stroke-dasharray="2 1"/></svg></button>
      </div>
      <div class="side-set d-flex flex-column align-items-center flex-shrink-0"><span class="grip"></span>
        <button class="btn tool" aria-label="Line"><svg viewBox="0 0 22 22"><path d="M2 3l17 16" stroke="#4c5d84" stroke-width="2"/></svg></button>
        <button class="btn tool" aria-label="Rectangle"><svg viewBox="0 0 22 22"><path d="M3 5h16v12H3z" fill="url(#gb)" stroke="#4c679c"/></svg></button>
        <button class="btn tool" aria-label="Add text"><svg viewBox="0 0 22 22"><text x="1" y="11" font-size="10" style="font-weight:400" fill="#555">abc</text><circle cx="16" cy="16" r="4" fill="#27a638" stroke="#147322"/><path d="M16 13.500v5M13.500 16h5" stroke="#fff"/></svg></button>
        <button class="btn tool" aria-label="Edit text"><svg viewBox="0 0 22 22"><text x="0" y="11" font-size="10" style="font-weight:400" fill="#555">abc</text><path d="M8 20l1-4 8-7 3 3-8 7z" fill="#f7c84b" stroke="#9c6321"/><path d="M17 9l3 3" stroke="#d85648" stroke-width="2"/></svg></button>
      </div>
      <div class="side-set wide d-flex flex-column align-items-center flex-shrink-0"><span class="grip"></span>
        <button class="btn tool" aria-label="Net protect"><svg viewBox="0 0 24 22"><use href="#net" width="24" height="22"/><path d="M10 5h12" stroke="#666" stroke-width="2"/><path d="M13 1h6v4h-6z" fill="#c94b52"/></svg></button>
        <button class="btn tool" aria-label="Net add"><svg viewBox="0 0 24 22"><use href="#net" width="24" height="22"/></svg></button>
        <button class="btn tool" aria-label="Net delete"><svg viewBox="0 0 24 22"><use href="#net" width="24" height="22"/><path d="M15 2l6 6M21 2l-6 6" stroke="#c93c38" stroke-width="2.500"/></svg></button>
        <button class="btn tool" aria-label="Net edit"><svg viewBox="0 0 24 22"><path d="M8 3h7l3 3v12H8z" fill="#fafafa" stroke="#888"/><use href="#net" width="24" height="22"/><path d="M4 12l7 5 2 4-4-1-7-5z" fill="#f7b34b" stroke="#a8671c" stroke-width="1"/></svg></button>
        <button class="btn tool" aria-label="Net fit"><svg viewBox="0 0 24 22"><path d="M5 7h14v9H5z" fill="#7be97b"/><path d="M2 3h20M2 1l3 5-3 5M22 1l-3 5 3 5M3 20h18" stroke="#237c35" stroke-width="2"/><path d="M12 5l-4 4h3v5H8l4 4 4-4h-3V9h3z" fill="#b8d5f0" stroke="#4c679c"/></svg></button>
      </div>
    </aside>

    <div class="center-area d-flex flex-column flex-grow-1">
      <main class="board flex-grow-1" aria-label="Design canvas"></main>
      <div class="dock d-flex flex-shrink-0">
        <section class="dock-pane d-flex flex-grow-1" aria-label="Command">
          <div class="dock-head d-flex flex-column align-items-center flex-shrink-0">
            <button aria-label="Close command"><svg width="7" height="7" stroke="#000" stroke-width="1.500"><path d="M1 1l5 5M6 1L1 6"/></svg></button>
            <button aria-label="Collapse command"><svg width="7" height="7"><path d="M5 1v5L2 3.500z"/></svg></button>
            <button aria-label="Pin command" class="pin mt-auto"><svg width="8" height="8" fill="none" stroke="#000"><path d="M1.500 1v6M6.500 1v6M1.500 4.500h5M4 4.500V8"/></svg></button>
            <span class="dock-name">Comma</span>
            <span class="dock-dots"></span>
          </div>
          <textarea class="console-box flex-grow-1" aria-label="Command console" readonly>Starting new design...
Command &gt;</textarea>
          <div class="bar-track d-flex flex-column justify-content-between">
            <button aria-label="Scroll up"><svg width="9" height="5" fill="#999"><path d="M0 5l4.500-5L9 5z"/></svg></button>
            <button aria-label="Scroll down"><svg width="9" height="5" fill="#999"><path d="M0 0l4.500 5L9 0z"/></svg></button>
          </div>
        </section>
        <section class="dock-pane world-pane d-flex flex-shrink-0" aria-label="WorldView">
          <div class="dock-head d-flex flex-column align-items-center flex-shrink-0">
            <button aria-label="Close world view"><svg width="7" height="7" stroke="#000" stroke-width="1.500"><path d="M1 1l5 5M6 1L1 6"/></svg></button>
            <button aria-label="Collapse world view"><svg width="7" height="7"><path d="M5 1v5L2 3.500z"/></svg></button>
            <button aria-label="Pin world view" class="pin mt-auto"><svg width="8" height="8" fill="none" stroke="#000"><path d="M1.500 1v6M6.500 1v6M1.500 4.500h5M4 4.500V8"/></svg></button>
            <span class="dock-name">WorldVi</span>
            <span class="dock-dots"></span>
          </div>
          <div class="world-map position-relative flex-grow-1"><span class="world-line position-absolute"></span></div>
        </section>
      </div>
    </div>

    <div class="panel-tabs flex-shrink-0 d-flex flex-column">
      <button class="panel-tab">Visibility</button>
      <button class="panel-tab">Options</button>
      <button class="panel-tab">Find</button>
    </div>
  </div>

  <footer class="status-bar d-flex flex-shrink-0">
    <div class="status-cell idle flex-grow-1">Idle</div>
    <div class="status-cell w53 lime"></div>
    <div class="status-cell w131"></div>
    <div class="status-cell w122">Outline</div>
    <div class="status-cell w131">25100.0, 16700.0</div>
    <button>P</button><button>A</button>
    <div class="status-cell w102"></div>
    <div class="status-cell w42"></div>
    <div class="status-cell w122">General edit</div>
    <div class="status-cell w71">Off</div>
    <div class="status-cell w53 lime">DRC</div>
    <div class="status-cell w42">0</div>
    <svg width="18" height="17" stroke="#999"><path d="M4 16L17 3M8 16l9-9M12 16l5-5"/></svg>
  </footer>
</div>
<div class="stamp-url position-fixed">https://blog.csdn.net/vicalove1609</div>
<div class="stamp position-fixed">CSDN @CN1号</div>
<script src="https://cdn.jsdelivr.net/npm/bootstrap@5.3.0/dist/js/bootstrap.bundle.min.js"></script>
</body>
</html>
